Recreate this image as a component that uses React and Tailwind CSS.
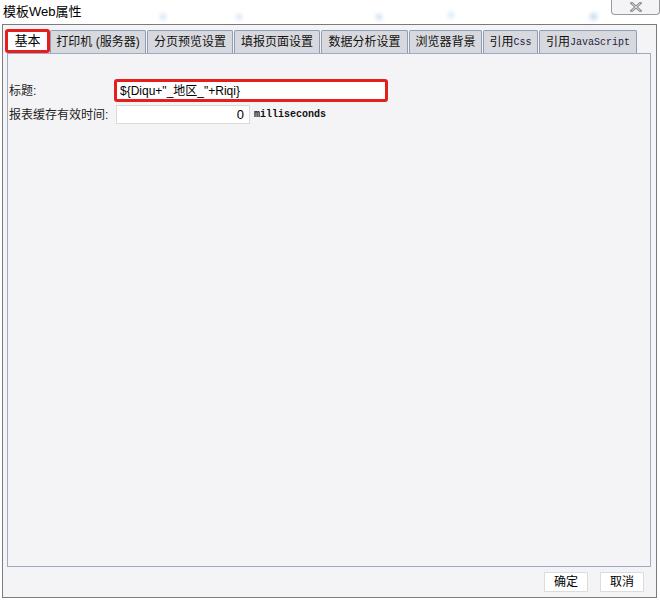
const sans = { fontFamily: '"Liberation Sans", "Noto Sans CJK SC", sans-serif' };

const tabs = [
  { label: '打印机 (服务器)', w: 'w-[96px]' },
  { label: '分页预览设置', w: 'w-[86px]' },
  { label: '填报页面设置', w: 'w-[86px]' },
  { label: '数据分析设置', w: 'w-[87px]' },
  { label: '浏览器背景', w: 'w-[73px]' },
  { label: '引用', mono: 'Css', w: 'w-[55px]' },
  { label: '引用', mono: 'JavaScript', w: 'w-[98px]' },
];

function Tab({ tab }) {
  return (
    <div
      className={`${tab.w} h-[23px] shrink-0 flex items-center justify-center rounded-t-[2px] border border-b-0 border-[#8f9db5] bg-[#d8d9de] text-[12px] text-[#111] mr-px whitespace-pre`}
    >
      {tab.label}
      {tab.mono && (
        <span className="font-['Liberation_Mono',monospace] text-[10px] text-[#1a2340]">{tab.mono}</span>
      )}
    </div>
  );
}

export default function App() {
  return (
    <div className="relative w-[660px] h-[600px] bg-white overflow-hidden" style={sans}>
      {/* aero glass specks */}
      <span className="absolute left-[160px] top-[14px] w-[6px] h-[6px] rounded-full bg-[#cfe0f5] blur-[2px]" />
      <span className="absolute left-[236px] top-[14px] w-[6px] h-[6px] rounded-full bg-[#d6e4f5] blur-[2px]" />
      <span className="absolute left-[376px] top-[14px] w-[6px] h-[6px] rounded-full bg-[#c9dbf2] blur-[2px]" />
      <span className="absolute left-[448px] top-[12px] w-[6px] h-[6px] rounded-full bg-[#d4e3f5] blur-[2px]" />
      <span className="absolute left-[590px] top-[13px] w-[7px] h-[7px] rounded-full bg-[#c4d7f0] blur-[2px]" />

      <div className="h-[24px] flex items-center pl-[3px] text-[13px] text-black">模板Web属性</div>

      <div className="absolute right-0 top-0 w-[49px] h-[15px] rounded-b-[4px] border border-t-0 border-[#9a9a9a] bg-[#f4f4f6] flex items-center justify-center">
        <svg width="12" height="10" viewBox="0 0 12 10">
          <path d="M1.5 1 L10.5 9 M10.5 1 L1.5 9" stroke="#8a8a8a" strokeWidth="2.6" strokeLinecap="square" />
          <path d="M1.5 1 L10.5 9 M10.5 1 L1.5 9" stroke="#e8e8e8" strokeWidth="0.9" />
        </svg>
      </div>

      <div className="ml-[2px] w-[655px] h-[574px] border border-[#7b7b7b] bg-[#f4f4f6] flex flex-col">
        <div className="flex items-end pl-[2px] pt-[4px] h-[28px]">
          <div className="w-[45px] h-[24px] shrink-0 flex items-center justify-center rounded-[3px] border-[3px] border-[#e5201c] bg-white text-[13px] text-black">
            基本
          </div>
          {tabs.map((t, i) => (
            <Tab key={i} tab={t} />
          ))}
        </div>

        <div className="ml-[4px] w-[644px] h-[514px] border border-[#9dabc5] bg-[#f4f4f6] pt-[25px] pl-[1px]">
          <div className="flex items-center h-[23px]">
            <div className="w-[105px] text-[12px] text-[#222]">标题:</div>
            <div className="w-[274px] h-[23px] rounded-[3px] border-[3px] border-[#e5201c] bg-white flex items-center pl-[3px] text-[12px] text-black">
              {'${Diqu+"_地区_"+Riqi}'}
            </div>
          </div>
          <div className="flex items-center h-[19px] mt-[3px]">
            <div className="w-[107px] text-[12px] text-[#222]">报表缓存有效时间:</div>
            <div className="w-[134px] h-[19px] border border-[#d9d9d9] bg-white flex items-center justify-end pr-[5px] text-[13px] text-black">
              0
            </div>
            <span className="ml-[4px] font-['Liberation_Mono',monospace] font-bold text-[10px] text-[#111]">milliseconds</span>
          </div>
        </div>

        <div className="flex justify-end items-center gap-[12px] pr-[12px] pt-[5px]">
          <div className="w-[44px] h-[20px] border border-[#dcdcdc] bg-white flex items-center justify-center text-[12px] text-black">
            确定
          </div>
          <div className="w-[44px] h-[20px] border border-[#dcdcdc] bg-white flex items-center justify-center text-[12px] text-black">
            取消
          </div>
        </div>
      </div>
    </div>
  );
}
